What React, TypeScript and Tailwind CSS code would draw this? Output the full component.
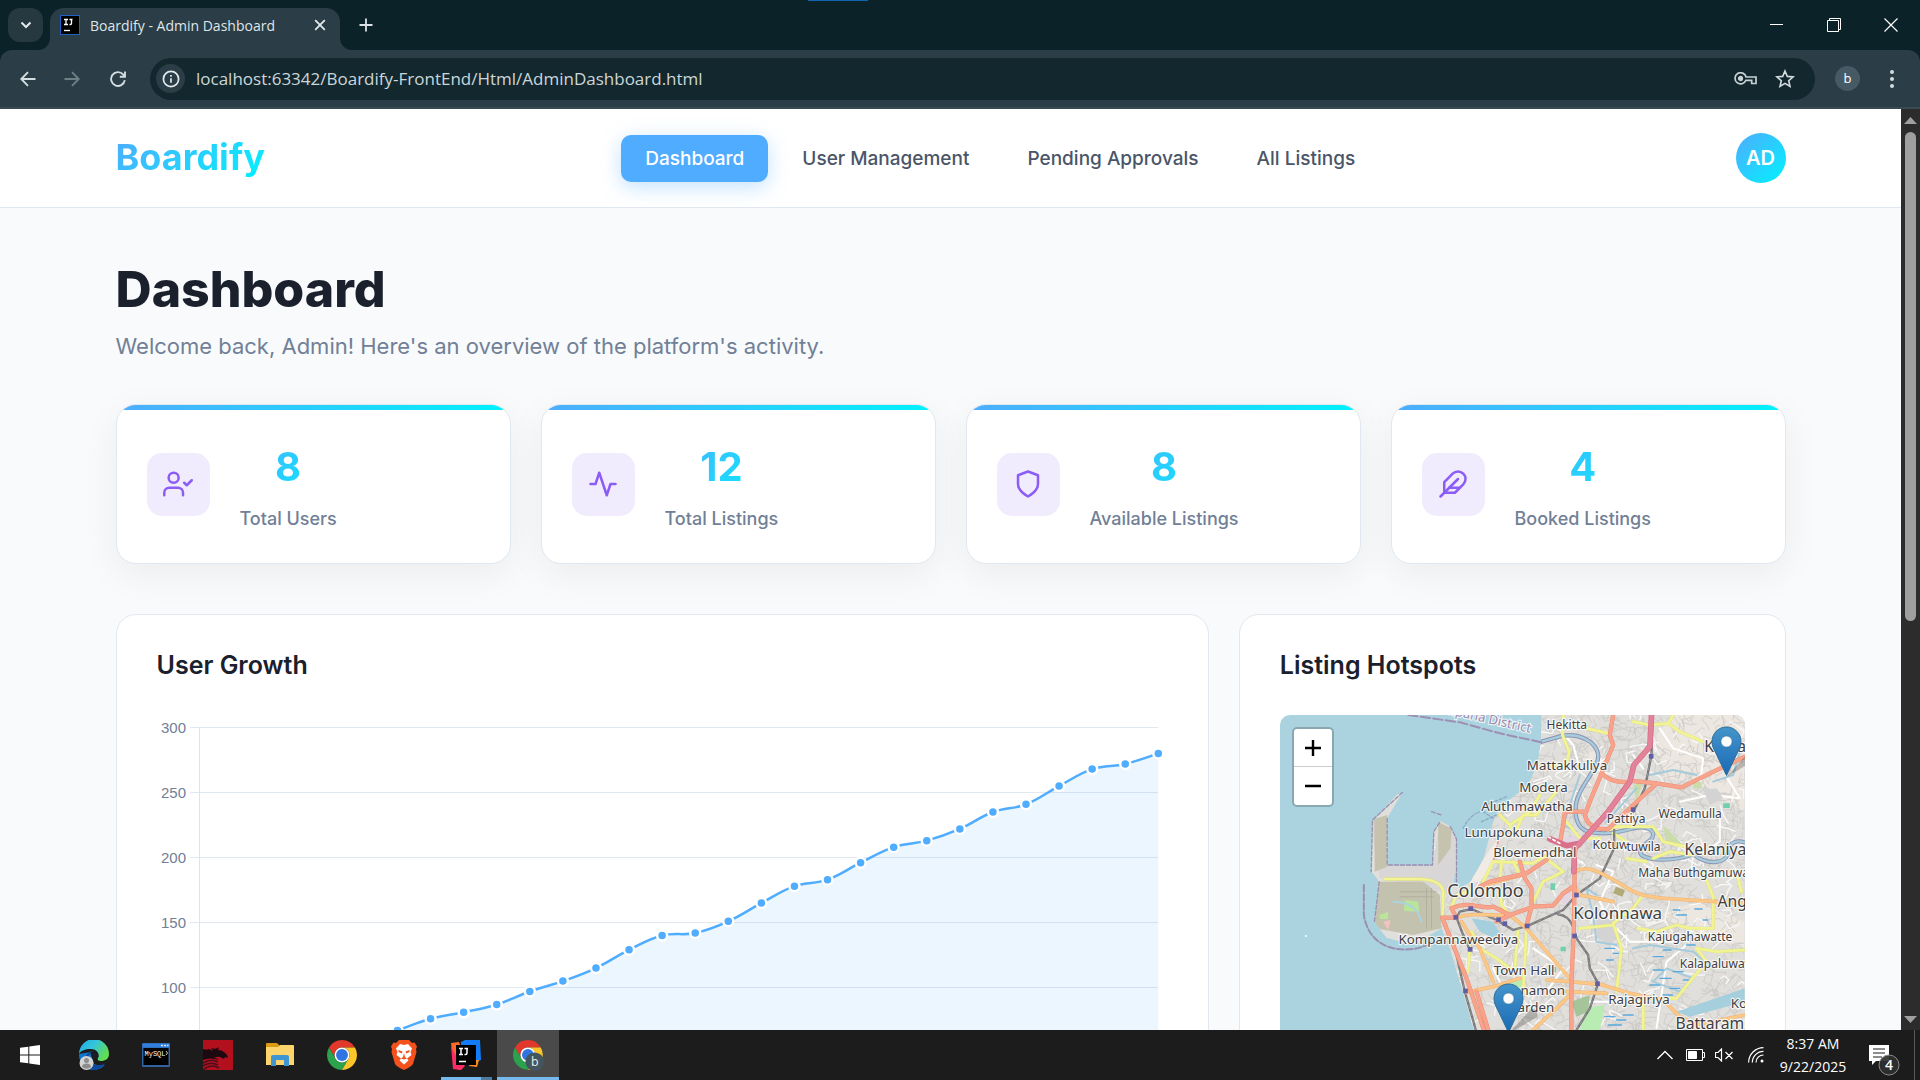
import React from "react";

/* ---------- data ---------- */

const navItems = [
  { label: "Dashboard", active: true },
  { label: "User Management", active: false },
  { label: "Pending Approvals", active: false },
  { label: "All Listings", active: false },
];

const growth = [
  12, 20, 28, 39, 47, 58, 67, 76, 81, 87, 97, 105, 115, 129, 140, 142, 151, 165, 178, 183, 196, 208, 213, 222, 235,
  241, 255, 268, 272, 280,
];

/* ---------- stat icons ---------- */

function StatIcon({ children }: { children: React.ReactNode }) {
  return (
    <span className="flex size-[63px] shrink-0 items-center justify-center rounded-[15px] bg-[#f1ecfd]">
      <svg
        viewBox="0 0 24 24"
        className="size-[30px]"
        fill="none"
        stroke="#8b5cf6"
        strokeWidth="2"
        strokeLinecap="round"
        strokeLinejoin="round"
        aria-hidden="true"
      >
        {children}
      </svg>
    </span>
  );
}

const stats = [
  {
    value: "8",
    label: "Total Users",
    icon: (
      <>
        <path d="M16 21v-2a4 4 0 0 0-4-4H5a4 4 0 0 0-4 4v2" />
        <circle cx="8.5" cy="7" r="4" />
        <polyline points="17 11 19 13 23 9" />
      </>
    ),
  },
  { value: "12", label: "Total Listings", icon: <polyline points="22 12 18 12 15 21 9 3 6 12 2 12" /> },
  { value: "8", label: "Available Listings", icon: <path d="M12 22s8-4 8-10V5l-8-3-8 3v7c0 6 8 10 8 10z" /> },
  {
    value: "4",
    label: "Booked Listings",
    icon: (
      <>
        <path d="M20.24 12.24a6 6 0 0 0-8.49-8.49L5 10.5V19h8.5z" />
        <line x1="16" y1="8" x2="2" y2="22" />
        <line x1="17.5" y1="15" x2="9" y2="15" />
      </>
    ),
  },
];

/* ---------- browser chrome ---------- */

function IdeaGlyph({ className }: { className: string }) {
  return (
    <svg viewBox="0 0 20 20" className={className} aria-hidden="true">
      <rect x="0.5" y="0.5" width="19" height="19" fill="#000" stroke="#1d62c4" />
      <path d="M4 4.5h4M6 4.5v5M4 9.500h4M9.500 4.500h3M11.500 4.500v4q0 1-1 1h-1" stroke="#fff" strokeWidth="1.300" fill="none" />
      <path d="M4 15.500h6" stroke="#fff" strokeWidth="1.300" />
    </svg>
  );
}

function TabStrip() {
  return (
    <div className="flex h-[50px] shrink-0 items-stretch bg-[#0b2229]">
      <button
        aria-label="Search tabs"
        className="mt-2 ml-2 flex h-[34px] w-[35px] items-center justify-center rounded-[12px] bg-[#263941]"
      >
        <svg viewBox="0 0 12 12" className="size-3" fill="none" stroke="#e3eaec" strokeWidth="2">
          <path d="M1.500 3.500 6 8l4.500-4.500" />
        </svg>
      </button>
      <div className="relative mt-2 ml-[7px] flex w-[290px] items-center rounded-t-[14px] bg-[#2b3d46] pr-[10px] pb-2 pl-[10px]">
        <svg viewBox="0 0 12 12" className="absolute bottom-0 -left-3 size-3" aria-hidden="true">
          <path d="M12 0v12H0A12 12 0 0 0 12 0z" fill="#2b3d46" />
        </svg>
        <svg viewBox="0 0 12 12" className="absolute -right-3 bottom-0 size-3" aria-hidden="true">
          <path d="M0 0v12h12A12 12 0 0 1 0 0z" fill="#2b3d46" />
        </svg>
        <IdeaGlyph className="size-5 shrink-0" />
        <span className="ml-[10px] flex-1 text-[14px] whitespace-nowrap text-[#dfe6e8]">Boardify - Admin Dashboard</span>
        <button aria-label="Close tab" className="flex size-5 items-center justify-center">
          <svg viewBox="0 0 12 12" className="size-3" stroke="#e3eaec" strokeWidth="1.800">
            <path d="M1.200 1.200l9.600 9.600M10.800 1.200L1.200 10.800" />
          </svg>
        </button>
      </div>
      <button aria-label="New tab" className="ml-[18px] flex w-4 items-center justify-center">
        <svg viewBox="0 0 14 14" className="size-[14px]" stroke="#dbe3e6" strokeWidth="1.800">
          <path d="M7 0.500v13M0.500 7h13" />
        </svg>
      </button>
      <div className="flex flex-1 pl-[434px]">
        <span className="h-px w-[60px] bg-[#0f65b0]" />
      </div>
      <div className="flex">
        <button aria-label="Minimize" className="flex w-[57px] items-center justify-center">
          <svg viewBox="0 0 14 14" className="size-[14px]" stroke="#fff" strokeWidth="1">
            <path d="M0 6.500h13" />
          </svg>
        </button>
        <button aria-label="Restore" className="flex w-[57px] items-center justify-center">
          <svg viewBox="0 0 14 14" className="size-[14px]" stroke="#fff" strokeWidth="1" fill="none">
            <path d="M0.500 2.500h11v11h-11zM2.500 2.500v-2h11v11h-2" />
          </svg>
        </button>
        <button aria-label="Close" className="flex w-[58px] items-center justify-center">
          <svg viewBox="0 0 14 14" className="size-[14px]" stroke="#fff" strokeWidth="1.200">
            <path d="M0.500 0.500l13 13M13.500 0.500l-13 13" />
          </svg>
        </button>
      </div>
    </div>
  );
}

function Toolbar() {
  return (
    <div className="shrink-0 bg-[#0b2229]">
      <div className="flex h-[59px] items-center rounded-t-[12px] border-b-2 border-[#3b4a50] bg-[#2b3d46] pr-5 pl-[18px]">
        <button aria-label="Back" className="flex size-5 items-center justify-center">
          <svg viewBox="0 0 16 16" className="size-4" fill="none" stroke="#d3dcdf" strokeWidth="1.900">
            <path d="M15.500 8H1.500M8 1.200 1.300 8 8 14.800" />
          </svg>
        </button>
        <button aria-label="Forward" className="ml-6 flex size-5 items-center justify-center">
          <svg viewBox="0 0 16 16" className="size-4" fill="none" stroke="#6f7f86" strokeWidth="1.900">
            <path d="M0.500 8h14M8 1.200 14.700 8 8 14.800" />
          </svg>
        </button>
        <button aria-label="Reload" className="ml-[26px] flex size-5 items-center justify-center">
          <svg viewBox="0 0 16 16" className="size-4" fill="none" stroke="#d3dcdf" strokeWidth="1.900">
            <path d="M14.800 9.200A6.900 6.900 0 1 1 13.300 3.600L15 5.500M15 0.500v5.200H9.800" />
          </svg>
        </button>
        <div className="ml-[22px] flex h-[42px] flex-1 items-center rounded-full bg-[#12282e] pr-[18px] pl-[6px]">
          <button
            aria-label="View site information"
            className="flex size-[29px] items-center justify-center rounded-full bg-[#2b3d46]"
          >
            <svg viewBox="0 0 18 18" className="size-[18px]" fill="none" stroke="#e3eaec" strokeWidth="1.700">
              <circle cx="9" cy="9" r="7.600" />
              <path d="M9 8.200v4.600M9 5v1.800" />
            </svg>
          </button>
          <input
            aria-label="Address"
            defaultValue="localhost:63342/Boardify-FrontEnd/Html/AdminDashboard.html"
            className="ml-[11px] flex-1 bg-transparent text-[17px] text-[#cdd6d9] outline-none"
          />
          <button aria-label="Passwords" className="flex h-6 w-6 items-center justify-center">
            <svg viewBox="0 0 23 13" className="h-[13px] w-[23px] shrink-0" fill="none" stroke="#c8d2d5" strokeWidth="1.700">
              <path d="M12.100 5H22v6.500h-4.300V8.300h-5.800A5.600 5.600 0 1 1 12.100 5z" />
              <circle cx="6.500" cy="6.500" r="1.800" fill="#c8d2d5" />
            </svg>
          </button>
          <button aria-label="Bookmark this tab" className="ml-4 flex size-6 items-center justify-center">
            <svg viewBox="0 0 20 20" className="size-5" fill="none" stroke="#d3dcdf" strokeWidth="1.600">
              <path d="M10 2l2.300 5.400 5.800.5-4.400 3.800 1.300 5.700L10 14.400l-5 3 1.300-5.700L1.900 7.900l5.800-.5z" />
            </svg>
          </button>
        </div>
        <button
          aria-label="Profile"
          className="ml-5 flex size-[25px] items-center justify-center rounded-full bg-[#465a66] text-[13px] text-white"
        >
          b
        </button>
        <button aria-label="Menu" className="ml-[24px] flex size-4 items-center justify-center">
          <svg viewBox="0 0 6 20" className="h-5 w-[6px] shrink-0" fill="#d3dcdf">
            <circle cx="3" cy="3" r="2" />
            <circle cx="3" cy="10" r="2" />
            <circle cx="3" cy="17" r="2" />
          </svg>
        </button>
      </div>
    </div>
  );
}

/* ---------- page ---------- */

function SiteHeader() {
  return (
    <header className="border-b border-[#e2e8f0] bg-white">
      <div className="mx-auto flex max-w-[1750px] items-center justify-between px-10 py-6">
        <a
          href="#home"
          className="bg-[linear-gradient(135deg,#4facfe,#00f2fe)] bg-clip-text pb-[2px] text-[36px] leading-[48px] font-bold text-transparent"
        >
          Boardify
        </a>
        <nav className="flex gap-[10px]">
          {navItems.map((n) => (
            <a
              key={n.label}
              href={"#" + n.label.toLowerCase().replace(" ", "-")}
              className={
                n.active
                  ? "rounded-[10px] bg-[#4facfe] px-6 text-[19px] leading-[47px] font-medium text-white shadow-[0_5px_20px_rgba(79,172,254,0.35)]"
                  : "rounded-[10px] px-6 text-[19px] leading-[47px] font-medium text-[#4a5568]"
              }
            >
              {n.label}
            </a>
          ))}
        </nav>
        <button
          aria-label="Account"
          className="size-[50px] rounded-full bg-[linear-gradient(135deg,#4facfe,#00f2fe)] text-[20px] font-semibold text-white"
        >
          AD
        </button>
      </div>
    </header>
  );
}

function StatCard({ value, label, icon }: { value: string; label: string; icon: React.ReactNode }) {
  return (
    <article className="relative flex items-center gap-[30px] overflow-hidden rounded-[20px] border border-[#e2e8f0] bg-white p-[30px] shadow-[0_10px_38px_rgba(0,0,0,0.06)]">
      <span className="absolute inset-x-0 top-0 h-[5px] bg-[linear-gradient(90deg,#4facfe,#00f2fe)]" />
      <StatIcon>{icon}</StatIcon>
      <div className="text-center">
        <p className="mb-[5px] bg-[linear-gradient(135deg,#4facfe,#00f2fe)] bg-clip-text text-[40px] leading-[64px] font-bold text-transparent">
          {value}
        </p>
        <p className="text-[18px] leading-[29px] font-medium text-[#718096]">{label}</p>
      </div>
    </article>
  );
}

const X0 = 42;
const X1 = 1001;
const TOP = 12.5;
const UNIT = 1.3;
const pts = growth.map((v, i) => ({ x: X0 + ((X1 - X0) * i) / (growth.length - 1), y: TOP + (300 - v) * UNIT }));

function curve(t: number) {
  let d = `M${pts[0].x} ${pts[0].y}`;
  for (let i = 0; i < pts.length - 1; i++) {
    const p0 = pts[Math.max(i - 1, 0)];
    const p1 = pts[i];
    const p2 = pts[i + 1];
    const p3 = pts[Math.min(i + 2, pts.length - 1)];
    d += `C${p1.x + ((p2.x - p0.x) * t) / 2} ${p1.y + ((p2.y - p0.y) * t) / 2} ${p2.x - ((p3.x - p1.x) * t) / 2} ${
      p2.y - ((p3.y - p1.y) * t) / 2
    } ${p2.x} ${p2.y}`;
  }
  return d;
}

function GrowthChart() {
  const line = curve(0.4);
  const base = TOP + 300 * UNIT;
  return (
    <svg viewBox="0 0 1011 450" className="w-full" role="img" aria-label="User growth over the last 30 days">
      {[300, 250, 200, 150, 100, 50, 0].map((v) => {
        const y = TOP + (300 - v) * UNIT;
        return (
          <g key={v}>
            <line x1="33" x2={X1} y1={y} y2={y} stroke="#e2e8f0" />
            <text x="29" y={y + 5} textAnchor="end" fontSize="15" fill="#718096" className="font-['Liberation_Sans',sans-serif]">
              {v}
            </text>
          </g>
        );
      })}
      <line x1="42.5" x2="42.5" y1={TOP} y2={base} stroke="#dfe3ea" />
      <path d={`${line}L${X1} ${base}L${X0} ${base}Z`} fill="#4facfe" fillOpacity="0.11" />
      <path d={line} fill="none" stroke="#4facfe" strokeWidth="2.5" />
      {pts.map((p) => (
        <circle key={p.x} cx={p.x} cy={p.y} r="5" fill="#4facfe" stroke="#fff" strokeWidth="2.5" />
      ))}
    </svg>
  );
}

/* ---------- map ---------- */

const LAND =
  "M785 0L783 85L772 150L742 215L700 245L655 285L640 320L612 430L572 500L540 520L520 505L532 440L527 372L512 335L482 318L462 350L458 452L325 452L322 310L368 232L350 240L278 320L275 470L295 495L290 570L283 620L320 668L400 690L485 640L510 700L540 800L582 945L640 1200L700 1500H1395V0Z";

function makeStreets() {
  let s = 7;
  const rnd = () => {
    s = (s * 16807) % 2147483647;
    return s / 2147483647;
  };
  let grey = "";
  let white = "";
  for (let i = 0; i < 1500; i++) {
    let x = 500 + rnd() * 900;
    let y = rnd() * 1000;
    let a = rnd() * 6.28;
    let d = `M${x.toFixed(0)} ${y.toFixed(0)}`;
    const n = 2 + Math.floor(rnd() * 3);
    for (let k = 0; k < n; k++) {
      a += rnd() < 0.5 ? (rnd() - 0.5) * 0.8 : 1.4;
      const len = 8 + rnd() * 22;
      x += Math.cos(a) * len;
      y += Math.sin(a) * len;
      d += `L${x.toFixed(0)} ${y.toFixed(0)}`;
    }
    if (i % 8 === 0) white += d;
    else grey += d;
  }
  return { grey, white };
}
const streets = makeStreets();

const RIVER =
  "M785 80L850 62C900 55 950 80 955 120C958 160 900 210 890 260C882 300 890 340 925 350C980 362 1020 350 1060 340C1110 330 1130 350 1115 372C1095 390 1070 400 1085 420C1110 438 1180 440 1240 418C1280 450 1340 450 1345 410C1350 380 1370 375 1395 382";

const YELLOW =
  "M850 0L848 60L868 110L860 150L800 150M920 40L985 55M1060 20L1110 30L1165 25L1200 50L1270 80M1165 25L1180 0M780 240L750 290L690 330L660 300M690 330L700 365L730 300L770 300L830 230M860 320L900 370L960 370M1000 355L1040 380M985 345L1010 335L1120 335L1150 380L1215 395M1120 430L1170 410L1240 420M315 492H420Q485 495 490 530L488 600M640 440L760 445L790 425L850 470M665 440L660 500M700 440L720 480M515 575L530 540L600 520L640 500M660 520L665 570L690 600M1085 545L1060 580L1000 625L1025 700L1010 830M1075 640L1130 650L1190 630L1230 640L1300 640L1300 545L1270 470M1040 430L1100 440M1250 700L1310 710L1395 705M1250 700L1280 740L1230 800L1190 850L1090 850L1090 945M715 640L705 760M740 640L730 830M570 690L565 770M575 650L600 700L650 730L690 760M640 440L610 500M1370 470L1385 530M850 470L790 500L760 560M900 640L1000 630";

const ORANGE =
  "M885 470C920 450 950 465 1010 500C1060 530 1070 545 1180 552L1395 565M540 605C590 590 640 605 690 600L740 640L800 710L870 790L880 800M545 620L570 660L600 700L640 800M560 832L640 815L720 790M800 795L870 800L960 808L1050 835L1150 855L1200 905L1250 930L1395 900M600 515L690 490L740 475M860 830L980 835M760 945L830 880L875 835M885 515L900 540L1000 560";

const PRIMARY =
  "M1000 0L990 60L1000 90L965 175L930 260L915 300Q925 345 985 342L1060 270L1130 205M965 175Q1000 210 1060 198L1130 205L1205 217L1290 175L1395 125M855 290L850 330L840 385M855 290L915 290M885 430L882 640L875 800L872 1500M515 580C570 555 600 585 640 575L690 600L760 575L820 572L850 535L885 512M690 600L650 620M720 440L735 490L755 520V575L740 632M530 608H487L520 690L560 790L612 945M800 435L740 475L630 500L600 515M590 830L625 945M515 580L530 608";

const RAIL =
  "M1118 0L1115 120L1095 220L1060 290M1003 345L1003 400L960 490L890 540L850 585L745 632L700 645L650 615L575 582L540 590L530 608L548 655L570 705M835 598Q865 600 880 635L890 670L925 720L930 760L955 805L930 880L890 945M530 720L555 830L588 945";

const STATIONS: [number, number][] = [
  [1114, 124], [1060, 284], [890, 540], [742, 633], [675, 626], [656, 614], [573, 581], [528, 607], [571, 703], [884, 663], [953, 806], [557, 828],
];

const LABELS: [string, number, number, number][] = [
  ["Hekitta", 800, 43, 36],
  ["Mattakkuliya", 741, 164, 40],
  ["Modera", 718, 230, 40],
  ["Aluthmawatha", 604, 289, 40],
  ["Lunupokuna", 554, 365, 40],
  ["Bloemendhal", 640, 426, 40],
  ["Colombo", 502, 545, 54],
  ["Kolonnawa", 880, 612, 51],
  ["Kompannaweediya", 356, 686, 40],
  ["Town Hall", 642, 780, 40],
  ["Cinnamon", 662, 840, 40],
  ["Garden", 684, 892, 40],
  ["Pattiya", 981, 324, 36],
  ["Wedamulla", 1136, 310, 36],
  ["Kotuw", 938, 401, 36],
  ["tuwila", 1040, 407, 36],
  ["Kelaniya", 1214, 419, 47],
  ["Maha Buthgamuwa", 1075, 485, 36],
  ["Angoda", 1313, 575, 47],
  ["Kajugahawatte", 1104, 678, 36],
  ["Kalapaluwawa", 1200, 758, 36],
  ["Rajagiriya", 985, 868, 40],
  ["Battaramulla", 1187, 943, 47],
  ["Kotte", 1353, 880, 40],
  ["K", 1273, 112, 47],
  ["a", 1372, 112, 47],
];

function MapTiles() {
  return (
    <svg
      viewBox="0 0 1395 1500"
      preserveAspectRatio="xMidYMin slice"
      className="h-full w-full"
      role="img"
      aria-label="Map of Colombo"
      fill="none"
      strokeLinejoin="round"
      strokeLinecap="round"
    >
      <clipPath id="land">
        <path d={LAND} />
      </clipPath>
      <rect width="1395" height="1500" fill="#aad3df" />
      <path d={LAND} fill="#e1dfdb" />
      <g clipPath="url(#land)">
        <path d="M1180 0H1395V290L1240 200L1150 190L1130 60ZM900 120L980 100L950 200ZM1140 600L1250 560L1395 620V700L1200 640Z" fill="#ece7e0" />
        <path d={streets.grey} stroke="#c7c5c3" strokeWidth="2" />
        <path d={streets.white} stroke="#f8f8f8" strokeWidth="4" />
        <path
          d="M1140 40L1180 100L1270 130L1262 200M1340 185L1380 250L1290 240L1200 260M1320 300V380L1290 400M950 450L1000 470L960 560L990 620M760 700L850 760L800 830M1130 940L1160 740L1220 690M1010 640L1050 680L1180 680M820 20L880 90L900 160M1060 120L1090 160M930 860H1080M640 760L700 880"
          stroke="#fff"
          strokeWidth="6"
        />
        <path d="M270 318L325 300V452H458L480 318L530 360V505L490 530L300 490Z" fill="#d8d6d6" />
        <path d="M283 312L322 300V455L285 470ZM475 322L515 340L512 400L475 450Z" fill="#c5c3ae" />
        <path d="M290 500L430 500L480 540L485 640L400 660L285 640Z" fill="#c3c2ae" />
        <path d="M375 555L415 560L418 590L372 588ZM298 600L325 590V612H300Z" fill="#b8e59a" />
        <path d="M310 620L332 615L325 645Z" fill="#f5c2c0" />
        <path d="M340 560Q410 560 425 620" stroke="#aad3df" strokeWidth="6" />
        <path d="M360 530H470M360 545H460M440 520V640M455 520V640" stroke="#aaa996" strokeWidth="2" />
        <path d="M612 430L655 370L640 450L600 500L572 500Z" fill="#f0ebe4" />
        <path d="M655 380L640 440L610 500" stroke="#f29a94" strokeWidth="6" strokeDasharray="6 10" />
        <path d="M845 370L905 360L890 400L840 395ZM830 545L880 530L860 575Z" fill="#e3d5e4" />
        <path d="M1008 515L1035 525L1028 545L1000 535Z" fill="#b1a978" />
        <path d="M1270 225L1310 220L1330 250L1290 270ZM950 600L1010 620L1000 690L950 670Z" fill="#d3d3d3" />
        <path d="M1240 200H1265V220H1240ZM1060 210L1090 200L1070 260ZM1150 330L1210 390L1160 385Z" fill="#cbdcab" />
        <path d="M690 800L730 795L722 830L690 825ZM915 880L975 870L960 945H900Z" fill="#b9ecb2" />
        <path d="M875 860L930 840L925 890L890 905Z" fill="#a5c49a" />
        <path d="M812 505h14v20h-14zM1330 265h20v14h-20zM842 695h16v14h-16zM815 755h14v16h-14zM700 665h14v18h-14z" fill="#72cfae" />
        <path d="M575 610L640 620L665 660L640 670L600 650ZM1190 890L1395 820V860L1230 905Z" fill="#a5cfdc" />
        <path d="M950 540L920 520L940 600L950 680L1010 690M1000 90L930 260M1110 180L1180 165L1250 180M1060 700L1110 690L1240 710L1300 760M1120 800L1160 760L1240 790L1200 830ZM1380 110L1360 180L1300 200M900 180L850 330L890 350M1070 220L980 320" stroke="#a4cbdc" strokeWidth="6" />
        <path
          d="M975 700h30M1000 715h28M980 735h20M1120 765h30M1140 790h34M1180 770h30M1110 810h30M1170 820h30M1210 795h26M1150 840h28M975 905h30M1010 915h28M985 930h40M1030 900h30M1180 585h20M1245 582h22M1190 600h30M1120 725h30M1220 690h26M1270 615h14M1150 705h24"
          stroke="#5aa9dd"
          strokeWidth="4"
        />
        <path d={RIVER} stroke="#8a93b4" strokeWidth="13" />
        <path d={RIVER} stroke="#a7cddb" strokeWidth="7" />
        <path d={YELLOW} stroke="#d9dc83" strokeWidth="10" />
        <path d={YELLOW} stroke="#f2f493" strokeWidth="8" />
        <path d={RAIL} stroke="#77777a" strokeWidth="7" />
        <path d={RAIL} stroke="#a5a5a5" strokeWidth="2" strokeDasharray="12 10" />
        <path d={ORANGE} stroke="#f0b273" strokeWidth="11" />
        <path d={ORANGE} stroke="#fbc888" strokeWidth="8" />
        <path d={PRIMARY} stroke="#ec8a70" strokeWidth="13" />
        <path d={PRIMARY} stroke="#f8a48c" strokeWidth="10" />
        <path d="M1115 0L1110 95L1062 150L1050 200L985 290L900 385L884 400L882 470M900 385L860 392L810 372" stroke="#d9708a" strokeWidth="17" />
        <path d="M1115 0L1110 95L1062 150L1050 200L985 290L900 385L884 400L882 470" stroke="#e38399" strokeWidth="12" />
        <path d="M840 385L806 366" stroke="#fff" strokeWidth="5" strokeDasharray="8 8" />
        {STATIONS.map(([x, y]) => (
          <rect key={x + "-" + y} x={x - 7} y={y - 7} width="14" height="14" fill="#5f5fa6" />
        ))}
      </g>
      <path d="M368 232L278 315L274 470M322 310V450H458L462 350L482 318M455 290L485 300M512 335L530 372V500M298 500L290 570L283 625" stroke="#9b8fb0" strokeWidth="4" strokeDasharray="12 6" />
      <path d="M252 510V600Q265 680 340 700Q400 710 440 690" stroke="#9b8fb0" strokeWidth="6" strokeDasharray="20 7" />
      <path d="M385 0L540 22L660 55L785 82" stroke="#9d8fb4" strokeWidth="6" strokeDasharray="28 10" />
      <path d="M605 320L650 300M620 270L680 245M610 290L640 310M550 340Q570 300 600 290" stroke="#8ea6c4" strokeWidth="4" strokeDasharray="8 6" />
      <circle cx="78" cy="663" r="3" fill="#fff" />
      <g
        className="font-['Noto_Sans',sans-serif]"
        stroke="#ffffff"
        strokeOpacity="0.75"
        strokeWidth="7"
        fill="#3f3f42"
        paintOrder="stroke"
      >
        <text x="440" y="-18" transform="rotate(13 440 -18)" fontSize="39" fill="#a08aae">
          Gampaha District
        </text>
        {LABELS.map(([t, x, y, s]) => (
          <text key={t} x={x} y={y} fontSize={s}>
            {t}
          </text>
        ))}
      </g>
    </svg>
  );
}

function Pin({ className }: { className: string }) {
  return (
    <svg viewBox="0 0 46 51" className={className} aria-label="Listing" role="img">
      <defs>
        <linearGradient id="pin" x1="0" y1="0" x2="0" y2="1">
          <stop offset="0" stopColor="#4495cb" />
          <stop offset="1" stopColor="#1a69b5" />
        </linearGradient>
      </defs>
      <path d="M15.500 51L38 26q8 0 6 8z" fill="#000" fillOpacity="0.22" />
      <path
        d="M15.500 1C7.500 1 1 7.500 1 15.500c0 4 1.500 7.500 3.800 11.500L15.500 49.500 26.200 27c2.300-4 3.800-7.500 3.800-11.500C30 7.500 23.500 1 15.500 1z"
        fill="url(#pin)"
        stroke="#2e6c97"
        strokeWidth="1"
      />
      <circle cx="15.500" cy="15.500" r="5.500" fill="#fff" stroke="#2e6c97" strokeOpacity="0.5" />
    </svg>
  );
}

function HotspotMap() {
  return (
    <div className="relative h-[500px] overflow-hidden rounded-[10px]">
      <MapTiles />
      <Pin className="absolute top-[11px] left-[431px] h-[51px] w-[46px]" />
      <Pin className="absolute top-[268px] left-[213px] h-[51px] w-[46px]" />
      <div className="absolute top-3 left-3 flex w-[42px] flex-col overflow-hidden rounded-[5px] border-2 border-[#88a9b2] bg-white">
        <button aria-label="Zoom in" className="flex h-[38px] items-center justify-center border-b border-[#cccccc]">
          <svg viewBox="0 0 16 16" className="size-4" stroke="#000" strokeWidth="2.400">
            <path d="M8 0v16M0 8h16" />
          </svg>
        </button>
        <button aria-label="Zoom out" className="flex h-[38px] items-center justify-center">
          <svg viewBox="0 0 16 16" className="size-4" stroke="#000" strokeWidth="2.400">
            <path d="M0 8h16" />
          </svg>
        </button>
      </div>
    </div>
  );
}

function Panel({ title, children }: { title: string; children: React.ReactNode }) {
  return (
    <section className="min-w-0 rounded-[20px] border border-[#e2e8f0] bg-white px-10 pt-8 pb-10">
      <h2 className="mb-8 text-[25px] leading-9 font-semibold text-[#1a202c]">{title}</h2>
      {children}
    </section>
  );
}

function Scrollbar() {
  return (
    <div className="flex w-[19px] shrink-0 flex-col items-center bg-[#2c2c2c]" aria-hidden="true">
      <svg viewBox="0 0 13 23" className="h-[23px] w-[13px] shrink-0" fill="#a0a0a0">
        <path d="M6.500 8L13 15H0z" />
      </svg>
      <span className="h-[489px] w-[11px] rounded-full bg-[#9f9f9f]" />
      <span className="flex-1" />
      <svg viewBox="0 0 13 20" className="h-5 w-[13px] shrink-0" fill="#a0a0a0">
        <path d="M6.500 13L0 6h13z" />
      </svg>
    </div>
  );
}

/* ---------- taskbar ---------- */

function ChromeMark() {
  return (
    <>
      <path d="M24 0A24 24 0 0 0 3.220 12L13.600 30A12 12 0 0 1 24 12H44.780A24 24 0 0 0 24 0z" fill="#e2382b" />
      <path d="M3.220 12A24 24 0 0 0 24 48L34.400 30A12 12 0 0 1 13.600 30z" fill="#2ba24c" />
      <path d="M44.780 12A24 24 0 0 1 24 48L34.400 30A12 12 0 0 0 24 12z" fill="#fcc629" />
      <circle cx="24" cy="24" r="12" fill="#fff" />
      <circle cx="24" cy="24" r="9.500" fill="#2f74e0" />
    </>
  );
}

function TaskbarIcon({ name }: { name: string }) {
  switch (name) {
    case "Edge":
      return (
        <svg viewBox="0 0 30 30" className="size-[30px]">
          <defs>
            <linearGradient id="edgeTop" x1="0" y1="0" x2="1" y2="0.5">
              <stop offset="0" stopColor="#1ea7e8" />
              <stop offset="0.5" stopColor="#33c5dd" />
              <stop offset="1" stopColor="#62dc52" />
            </linearGradient>
          </defs>
          <path d="M0 14A15 15 0 0 0 26 25Q20 27 15 24L11 12z" fill="#1275c9" />
          <path d="M0 14A15 15 0 0 1 30 14c0 5-4 7-8 7-3 0-4.500-1.500-3-3.500C21 14 18 9 12 9 6 9 1 11 0 14z" fill="url(#edgeTop)" />
          <path d="M15 11.500c-3-.5-5 2-5 5 0 5 4 8.500 9 8.500 3 0 5-.5 7-1.500-3 4-7 6.500-11 6.500C9 29 5 22 7 16c1.500-4 5-5.500 8-4.500z" fill="#0c4a9b" />
          <path d="M14.500 12a4.500 4.500 0 0 1 5 4.500c0 1.500-2 2-.5 3.500-3 0-6-2-6.500-4-.3-1.500.3-3.500 2-4z" fill="#1b1d22" />
          <circle cx="7.500" cy="23" r="7" fill="#d4d4d4" />
          <circle cx="7.500" cy="20.500" r="2.500" fill="#8d8d8d" />
          <path d="M3 27q0-3.500 4.500-3.500T12 27q-4.500 3.500-9 0z" fill="#8d8d8d" />
        </svg>
      );
    case "MySQL":
      return (
        <svg viewBox="0 0 28 24" className="h-6 w-7">
          <rect width="28" height="24" rx="1" fill="#31619f" />
          <rect x="0.5" y="0.5" width="27" height="4" fill="#2f7fdc" />
          <path d="M19 2.500h2M22 2.500h2M25 2.500h1.500" stroke="#d6e6f8" strokeWidth="1.500" />
          <rect x="1.500" y="5" width="25" height="17" fill="#000" />
          <text x="2.500" y="12.500" fontSize="7" fill="#fff" className="font-['Liberation_Mono',monospace]">MySQL</text>
          <path d="M24 8l1.500 2-1.500 2" stroke="#fff" fill="none" strokeWidth="0.800" />
        </svg>
      );
    case "Dragon":
      return (
        <svg viewBox="0 0 30 30" className="size-[30px]">
          <rect width="30" height="30" fill="#b3101e" />
          <path d="M0 9Q4 10 6 9L10 11 8 8Q13 10 16 7L15 10Q20 10 24 15L25 18 22 17 21 19 17 17Q14 16 11 18 14 18 16 20 7 17 0 20z" fill="#1c0a10" />
          <path d="M0 23Q8 18 15 22M0 26Q7 21 15 25M0 30Q8 23 16 28" stroke="#4a0f1b" strokeWidth="1.500" fill="none" />
        </svg>
      );
    case "File Explorer":
      return (
        <svg viewBox="0 0 28 24" className="h-6 w-7">
          <path d="M0 1Q0 0 1 0H11L14 3V8H0z" fill="#d99a14" />
          <path d="M0 4H12L14 2H27Q28 2 28 3V22H0z" fill="#fbd46b" />
          <path d="M5 23V14Q5 12 7 12H21Q23 12 23 14V23H18V17H10V23z" fill="#3f95d2" />
        </svg>
      );
    case "Chrome":
      return (
        <svg viewBox="0 0 48 48" className="size-[30px]">
          <ChromeMark />
        </svg>
      );
    case "Brave":
      return (
        <svg viewBox="0 0 26 30" className="h-[30px] w-[26px]">
          <path d="M5 3L8 0H18L21 3 23.500 2.500 26 6.500 25 9 25.500 12 22 24Q20 27 13 30 6 27 4 24L.5 12 1 9 0 6.500 2.500 2.500z" fill="#f4511d" />
          <path d="M9 4L13 5 17 4 21 8.500 19.500 12 20.500 15 16 18.500 17.500 20.500 13 24.500 8.500 20.500 10 18.500 5.500 15 6.500 12 5 8.500z" fill="#fff" />
          <path d="M7.500 10L11.500 11.500 11 13.500 7.500 12zM18.500 10L14.500 11.500 15 13.500 18.500 12zM13 13L14 17 16 18.500 13 19.500 10 18.500 12 17z" fill="#f4511d" />
        </svg>
      );
    case "IntelliJ IDEA":
      return (
        <svg viewBox="0 0 30 30" className="size-[30px]">
          <path d="M0 3L8 2 12 12 10 30 3 28z" fill="#fb6a2d" />
          <path d="M0 6L6 18 14 26 10 30 2 29z" fill="#fd2d63" />
          <path d="M10 2L14 0H29L30 20 22 24 10 10z" fill="#127cf8" />
          <path d="M20 20L28 20 26 27 18 26z" fill="#fb8a1e" />
          <rect x="5" y="5" width="20" height="20" fill="#000" />
          <path d="M8 8.500h4M10 8.500v6M8 14.500h4M13.500 8.500h3.500M16 8.500v4.500q0 1.500-1.500 1.500h-1M8 21.500h7" stroke="#fff" strokeWidth="1.500" fill="none" />
        </svg>
      );
    default:
      return (
        <svg viewBox="0 0 50 50" className="size-[31px]">
          <ChromeMark />
          <circle cx="35" cy="35" r="15" fill="#43555f" />
          <text x="35" y="42" textAnchor="middle" fontSize="20" fill="#e9eef0">b</text>
        </svg>
      );
  }
}

const apps = ["Edge", "MySQL", "Dragon", "File Explorer", "Chrome", "Brave", "IntelliJ IDEA", "Boardify - Chrome"];

function Taskbar() {
  return (
    <footer className="flex h-[50px] shrink-0 items-stretch bg-[#1c1c1d] text-white">
      <button aria-label="Start" className="flex w-[60px] items-center justify-center">
        <svg viewBox="0 0 20 20" className="size-5" fill="#fff">
          <path d="M0 2.800L8.300 1.700V9.500H0zM9.300 1.500L20 0V9.500H9.300zM0 10.500H8.300V18.300L0 17.200zM9.300 10.500H20V20L9.300 18.500z" />
        </svg>
      </button>
      <div className="ml-[3px] flex">
        {apps.map((a, i) => (
          <button
            key={a}
            aria-label={a}
            className={
              i === 7
                ? "relative flex w-[62px] items-center justify-center bg-[#4a4a4b]"
                : "relative flex w-[62px] items-center justify-center"
            }
          >
            <TaskbarIcon name={a} />
            {i === 6 && (
              <span className="absolute bottom-0 left-[6px] flex h-[3px] w-[51px]">
                <span className="flex-1 bg-[#76b9ed]" />
                <span className="w-[11px] bg-[#4f7ba0]" />
              </span>
            )}
            {i === 7 && <span className="absolute inset-x-0 bottom-0 h-[3px] bg-[#76b9ed]" />}
          </button>
        ))}
      </div>
      <div className="ml-auto flex items-center">
        <button aria-label="Show hidden icons" className="mr-[13px]">
          <svg viewBox="0 0 16 10" className="h-[10px] w-4" fill="none" stroke="#fff" strokeWidth="1.300">
            <path d="M0.500 9L8 1.500 15.500 9" />
          </svg>
        </button>
        <svg viewBox="0 0 19 12" className="mr-[10px] h-3 w-[19px]" fill="none" stroke="#fff" aria-label="Battery">
          <path d="M0.500 0.500h16v11h-16zM17 3.500h1.500v5H17" />
          <path d="M2.500 2.500h8v7h-8z" fill="#fff" />
        </svg>
        <svg viewBox="0 0 19 14" className="mr-[14px] h-[14px] w-[19px]" fill="none" stroke="#fff" strokeWidth="1.200" aria-label="Muted">
          <path d="M0.500 4.500h2.500L6.500 1v12L3 9.500H0.500zM10.500 4l7 7M17.500 4l-7 7" />
        </svg>
        <svg viewBox="0 0 16 16" className="mr-[14px] size-4" fill="none" stroke="#fff" strokeWidth="1.200" aria-label="Wi-Fi">
          <path d="M0.600 15.500A15 15 0 0 1 15.500 0.600M4.300 15.500A11.200 11.200 0 0 1 15.500 4.300M8 15.500A7.500 7.500 0 0 1 15.500 8" />
          <circle cx="14" cy="14" r="1.500" fill="#fff" stroke="none" />
        </svg>
        <div className="w-[70px] text-center text-[14px] leading-[23px] whitespace-nowrap">
          <p>8:37 AM</p>
          <p>9/22/2025</p>
        </div>
        <button aria-label="4 notifications" className="mt-[9px] mr-[14px] ml-[21px]">
          <svg viewBox="0 0 31 32" className="h-8 w-[31px]">
            <path d="M0 1H20V17H7L3 21V17H0z" fill="#fff" />
            <path d="M4 5h12M4 9h12M4 13h9" stroke="#1c1c1d" strokeWidth="1.200" />
            <circle cx="20" cy="21" r="10" fill="#2f2f30" fillOpacity="0.92" stroke="#8a8a8a" />
            <text x="20" y="26" textAnchor="middle" fontSize="14" fontWeight="600" fill="#fff">4</text>
          </svg>
        </button>
        <span className="mr-[5px] h-full w-px bg-[#5a5a5a]" />
      </div>
    </footer>
  );
}

export default function App() {
  return (
    <div className="flex h-screen flex-col overflow-hidden font-['Open_Sans','Noto_Sans',sans-serif]">
      <TabStrip />
      <Toolbar />
      <div className="flex min-h-0 flex-1">
        <div className="min-w-0 flex-1 overflow-hidden bg-[#f8fafc] font-[Inter,sans-serif]">
          <SiteHeader />
          <main className="mx-auto max-w-[1750px] px-10 pt-[41px] pb-10">
            <h1 className="text-[50px] leading-[80px] font-extrabold text-[#1a202c]">Dashboard</h1>
            <p className="mb-10 text-[22px] leading-[35px] text-[#718096]">
              Welcome back, Admin! Here's an overview of the platform's activity.
            </p>
            <div className="grid grid-cols-4 gap-[30px]">
              {stats.map((s) => (
                <StatCard key={s.label} value={s.value} label={s.label} icon={s.icon} />
              ))}
            </div>
            <div className="mt-[50px] grid grid-cols-[2fr_1fr] gap-[30px]">
              <Panel title="User Growth">
                <GrowthChart />
              </Panel>
              <Panel title="Listing Hotspots">
                <HotspotMap />
              </Panel>
            </div>
          </main>
        </div>
        <Scrollbar />
      </div>
      <Taskbar />
    </div>
  );
}
